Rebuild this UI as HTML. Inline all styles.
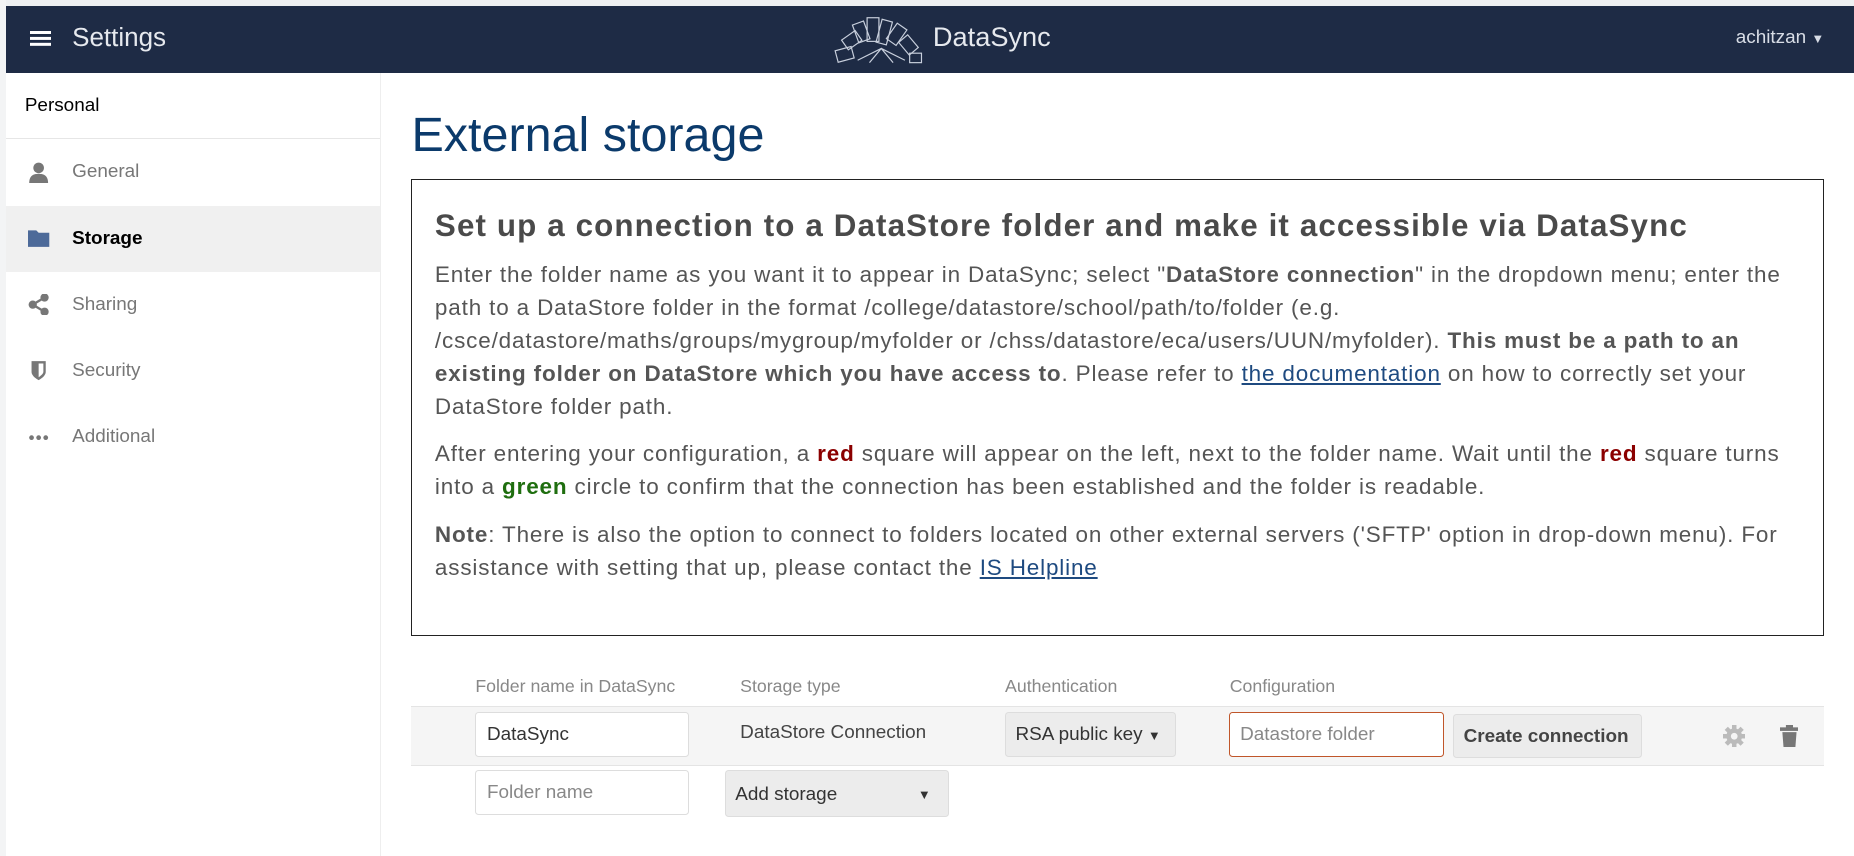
<!DOCTYPE html>
<html><head><meta charset="utf-8">
<style>
html{zoom:1.1824}
body{margin:0;width:1568px;height:724px;overflow:hidden;background:#fff;font-family:"Liberation Sans",sans-serif;position:relative}
.top{position:absolute;left:0;top:0;width:1568px;height:5px;background:#eef0f2}
.lb{position:absolute;left:0;top:0;width:5px;height:724px;background:#f3f4f5}
.hdr{position:absolute;left:5px;top:5px;width:1563px;height:57px;background:#1e2b45;color:#fff}
.side{position:absolute;left:5px;top:62px;width:316px;height:662px;border-right:1px solid #eee;background:#fff}
.side .p{height:55px;border-bottom:1px solid #e6e6e6;font-size:16px;color:#000;padding-left:16px;line-height:55px}
.side .it{height:56px;line-height:56px;font-size:16px;color:#777;position:relative;padding-left:56px}
.side .it.act{background:#f0f0f0;color:#000;font-weight:bold}
.side .ic{position:absolute;left:19px;top:19px;width:18px;height:18px}
.main{position:absolute;left:348px;top:62px;width:1195px}
h1{font-weight:normal;font-size:41px;color:#0b3a6b;margin:28px 0 0 0;height:60px;line-height:50px}
.box{border:1px solid #222;margin-top:1px;height:385px;padding:0 19px;color:#555;font-size:19px;line-height:28px;letter-spacing:0.72px;white-space:nowrap}
.box h2{font-size:26.5px;color:#4a4a4a;margin:22px 0 10px;line-height:34px;letter-spacing:0.95px}
.box p{margin:0 0 12px}
a{color:#1e4a80}
.red{color:#8b0000;font-weight:bold}.grn{color:#1f6e0f;font-weight:bold}
.th{position:absolute;top:572px;font-size:15px;color:#888}
.row{position:absolute;left:348px;top:597px;width:1195px;height:49px;background:#f5f5f5;border-top:1px solid #e4e4e4;border-bottom:1px solid #e4e4e4}
.inp{position:absolute;height:38px;border:1px solid #ddd;border-radius:3px;background:#fff;font-size:16px;line-height:38px;padding-left:9px;box-sizing:border-box}
.sel{position:absolute;height:38px;border:1px solid #ddd;border-radius:3px;background:#ececec;font-size:16px;line-height:38px;padding-left:8px;box-sizing:border-box;color:#333}
</style></head><body>
<div class="top"></div><div class="lb"></div>
<div class="hdr">
 <div style="position:absolute;left:20px;top:21px;width:18px;height:2.5px;background:#fff;box-shadow:0 5px 0 #fff,0 10px 0 #fff"></div>
 <div style="position:absolute;left:56px;top:14px;font-size:22px;color:#e6e9ee">Settings</div>
 <svg style="position:absolute;left:700px;top:6px" width="80" height="46" viewBox="0 0 80 46" fill="none" stroke="#c8cfdc" stroke-width="1">
  <rect x="2" y="30" width="14" height="10" transform="rotate(-15 9 35)"/><rect x="8" y="18" width="14" height="10" transform="rotate(-35 15 23)"/>
  <rect x="18" y="8" width="10" height="16" transform="rotate(-20 23 16)"/><rect x="28" y="4" width="10" height="20"/><rect x="38" y="6" width="9" height="20" transform="rotate(15 42 16)"/>
  <rect x="48" y="10" width="10" height="16" transform="rotate(35 53 18)"/><rect x="56" y="22" width="14" height="10" transform="rotate(50 63 27)"/><rect x="64" y="34" width="10" height="8"/>
  <path d="M20 40 L40 30 L60 40 M30 42 L40 30 L50 42"/></svg>
 <div style="position:absolute;left:784px;top:13px;font-size:23px;color:#e6e9ee">DataSync</div>
 <div style="position:absolute;left:1463px;top:18px;font-size:16px;color:#d8dde6">achitzan <span style="font-size:11px">▼</span></div>
</div>
<div class="side">
 <div class="p">Personal</div>
 <div class="it"><svg class="ic" viewBox="0 0 18 18" fill="#777"><circle cx="9" cy="5" r="4.5"/><path d="M1 18 C1 11 5 10 9 10 C13 10 17 11 17 18Z"/></svg>General</div>
 <div class="it act"><svg class="ic" viewBox="0 0 18 18" fill="#4d6a99"><path d="M0 2 H7 L9 4 H18 V16 H0Z"/></svg>Storage</div>
 <div class="it"><svg class="ic" viewBox="0 0 18 18" fill="#777" stroke="#777" stroke-width="2"><circle cx="14" cy="3" r="2.5"/><circle cx="4" cy="9" r="2.5"/><circle cx="14" cy="15" r="2.5"/><path d="M14 3 L4 9 L14 15" fill="none"/></svg>Sharing</div>
 <div class="it"><svg class="ic" viewBox="0 0 18 18"><path d="M3 1 H15 V10 C15 14 9 17 9 17 C9 17 3 14 3 10Z" fill="#777"/><path d="M9 3 H13 V10 C13 12 9 14.5 9 14.5Z" fill="#fff"/></svg>Security</div>
 <div class="it"><svg class="ic" viewBox="0 0 18 18" fill="#777"><circle cx="3" cy="9" r="2"/><circle cx="9" cy="9" r="2"/><circle cx="15" cy="9" r="2"/></svg>Additional</div>
</div>
<div class="main">
 <h1>External storage</h1>
 <div class="box">
  <h2>Set up a connection to a DataStore folder and make it accessible via DataSync</h2>
  <p>Enter the folder name as you want it to appear in DataSync; select "<b>DataStore connection</b>" in the dropdown menu; enter the<br>path to a DataStore folder in the format /college/datastore/school/path/to/folder (e.g.<br>/csce/datastore/maths/groups/mygroup/myfolder or /chss/datastore/eca/users/UUN/myfolder). <b>This must be a path to an</b><br><b>existing folder on DataStore which you have access to</b>. Please refer to <a href="#">the documentation</a> on how to correctly set your<br>DataStore folder path.</p>
  <p>After entering your configuration, a <span class="red">red</span> square will appear on the left, next to the folder name. Wait until the <span class="red">red</span> square turns<br>into a <span class="grn">green</span> circle to confirm that the connection has been established and the folder is readable.</p>
  <p><b>Note</b>: There is also the option to connect to folders located on other external servers ('SFTP' option in drop-down menu). For<br>assistance with setting that up, please contact the <a href="#">IS Helpline</a></p>
 </div>
</div>
<div class="th" style="left:402px">Folder name in DataSync</div>
<div class="th" style="left:626px">Storage type</div>
<div class="th" style="left:850px">Authentication</div>
<div class="th" style="left:1040px">Configuration</div>
<div class="row"></div>
<div class="inp" style="left:402px;top:602px;width:181px;color:#333">DataSync</div>
<div style="position:absolute;left:626px;top:611px;font-size:16px;color:#444">DataStore Connection</div>
<div class="sel" style="left:850px;top:602px;width:145px">RSA public key <span style="font-size:11px">▼</span></div>
<div class="inp" style="left:1039px;top:602px;width:182px;border-color:#c0562a;color:#888">Datastore folder</div>
<div class="sel" style="left:1229px;top:604px;width:160px;height:37px;font-weight:bold;color:#444;font-size:16px">Create connection</div>
<svg style="position:absolute;left:1457px;top:613px" width="19" height="19" viewBox="0 0 20 20"><g fill="#bbb"><circle cx="10" cy="10" r="7"/><rect x="8" y="0" width="4" height="20"/><rect x="0" y="8" width="20" height="4"/><rect x="8" y="0" width="4" height="20" transform="rotate(45 10 10)"/><rect x="8" y="0" width="4" height="20" transform="rotate(-45 10 10)"/></g><circle cx="10" cy="10" r="3" fill="#f5f5f5"/></svg>
<svg style="position:absolute;left:1505px;top:613px" width="16" height="19" viewBox="0 0 16 19" fill="#777"><rect x="0" y="2" width="16" height="3"/><rect x="5" y="0" width="6" height="3"/><path d="M2 6 H14 L13 19 H3Z"/></svg>
<div class="inp" style="left:402px;top:651px;width:181px;color:#888">Folder name</div>
<div class="sel" style="left:613px;top:651px;width:190px;height:40px;line-height:40px">Add storage<span style="position:absolute;right:15px;font-size:11px">▼</span></div>
</body></html>
